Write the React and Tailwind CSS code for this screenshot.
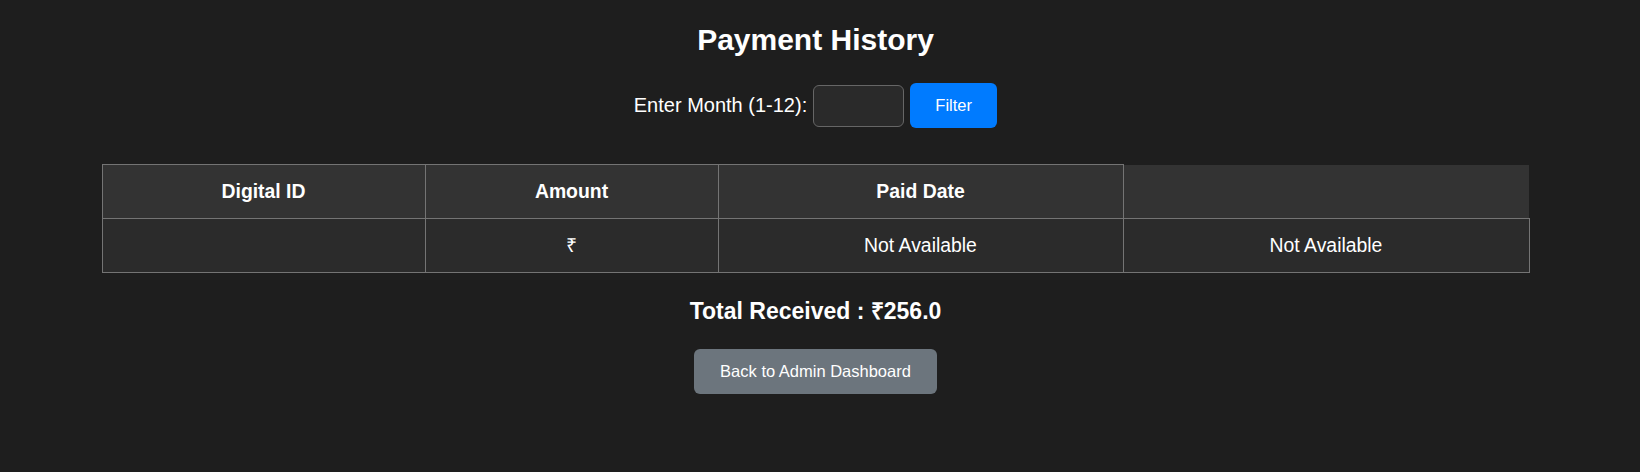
import { useState } from 'react'

const rows = [{ digitalId: '', amount: '', paidDate: null, extra: null }]

export default function App() {
  const [month, setMonth] = useState('')

  return (
    <div className="min-h-[472px] w-full bg-[#1e1e1e] text-white" style={{ fontFamily: '"Liberation Sans", Arial, sans-serif' }}>
      <div className="flex w-[1631px] flex-col items-center pt-[23px]">
        <h2 className="text-[30px] font-bold leading-[34px]">Payment History</h2>

        <div className="mt-[26px] flex items-center">
          <label className="mr-[6px] text-[20px] leading-[23px]">Enter Month (1-12):</label>
          <input
            type="text"
            value={month}
            onChange={(e) => setMonth(e.target.value)}
            className="h-[42px] w-[91px] rounded-[6px] border border-[#666] bg-[#2a2a2a] px-2 text-white outline-none"
          />
          <button className="ml-[6px] h-[45px] w-[87px] rounded-[6px] bg-[#007bff] text-[16.5px] text-white">Filter</button>
        </div>

        <table className="mt-[36px] w-[1427px] table-fixed border-collapse text-[19.4px]">
          <colgroup>
            <col className="w-[323px]" />
            <col className="w-[293px]" />
            <col className="w-[405px]" />
            <col className="w-[406px]" />
          </colgroup>
          <thead>
            <tr className="h-[54px] bg-[#333333]">
              <th className="border border-[#747474] font-bold">Digital ID</th>
              <th className="border border-[#747474] font-bold">Amount</th>
              <th className="border border-[#747474] font-bold">Paid Date</th>
              <th className="font-bold"></th>
            </tr>
          </thead>
          <tbody>
            {rows.map((r, i) => (
              <tr key={i} className="h-[54px] bg-[#2b2b2b] text-center">
                <td className="border border-[#747474]">{r.digitalId}</td>
                <td className="border border-[#747474]">₹{r.amount}</td>
                <td className="border border-[#747474]">{r.paidDate ?? 'Not Available'}</td>
                <td className="border border-[#747474]">{r.extra ?? 'Not Available'}</td>
              </tr>
            ))}
          </tbody>
        </table>

        <h3 className="mt-[25px] text-[23px] font-bold leading-[26px]">Total Received : ₹256.0</h3>

        <button className="mt-[25px] h-[45px] w-[243px] rounded-[6px] bg-[#6c757d] text-[16.5px] text-white">
          Back to Admin Dashboard
        </button>
      </div>
    </div>
  )
}
